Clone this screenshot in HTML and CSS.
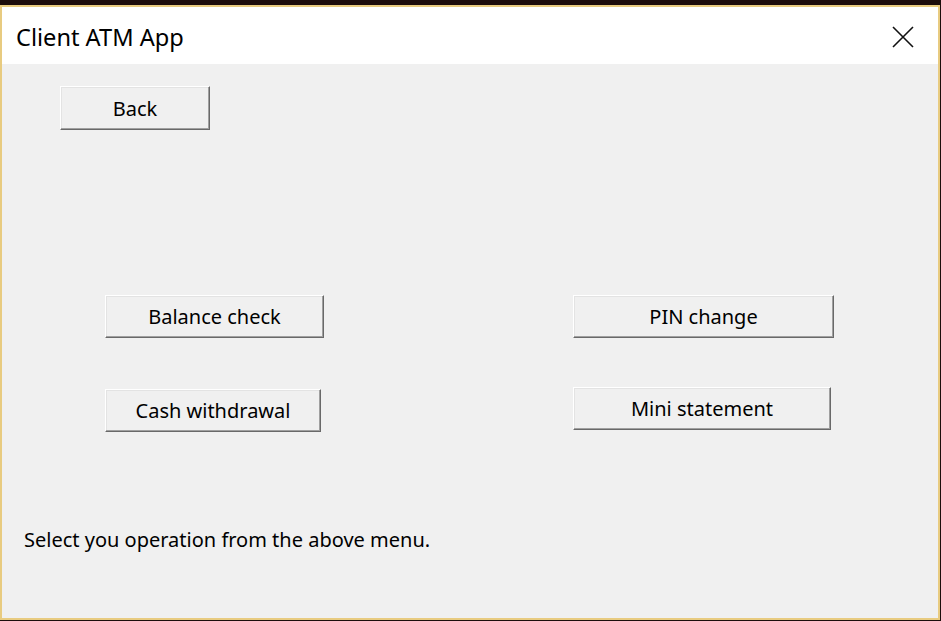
FILE: index.html
```html
<!DOCTYPE html>
<html>
<head>
<meta charset="utf-8">
<link rel="stylesheet" href="styles.css">
</head>
<body>
<div class="window">
  <div class="titlebar">
    <span class="title">Client ATM App</span>
    <span class="close">
      <svg width="22" height="22" viewBox="0 0 22 22"><path d="M1 1 L21 21 M21 1 L1 21" stroke="#111" stroke-width="1.6" fill="none"/></svg>
    </span>
  </div>
  <div class="client">
    <div class="row-back">
      <button class="btn btn-back">Back</button>
    </div>
    <div class="row row-1">
      <button class="btn btn-balance">Balance check</button>
      <button class="btn btn-pin">PIN change</button>
    </div>
    <div class="row row-2">
      <button class="btn btn-cash">Cash withdrawal</button>
      <button class="btn btn-mini">Mini statement</button>
    </div>
    <div class="status">Select you operation from the above menu.</div>
  </div>
</div>
</body>
</html>
```
FILE: styles.css
```css
html, body {
  margin: 0;
  padding: 0;
  width: 941px;
  height: 621px;
  overflow: hidden;
  background: #1c0d0c;
  font-family: "Noto Sans", "Open Sans", sans-serif;
}
.window {
  margin: 5px 1px 1px 0;
  width: 936px;
  height: 611px;
  border: 2px solid #e8cb80;
  display: flex;
  flex-direction: column;
}
.titlebar {
  height: 57px;
  background: #ffffff;
  display: flex;
  align-items: center;
  justify-content: space-between;
  padding: 0 24px 0 14px;
}
.title {
  font-size: 23.6px;
  color: #000;
  padding-top: 2px;
}
.close {
  display: flex;
  padding-top: 3px;
}
.client {
  flex: 1;
  background: #f0f0f0;
  display: flex;
  flex-direction: column;
}
.btn {
  font-family: inherit;
  font-size: 20px;
  color: #000;
  background: #f0f0f0;
  border: 1px solid;
  border-color: #ffffff #696969 #696969 #ffffff;
  box-shadow: inset -1px -1px 0 #a0a0a0, inset 1px 1px 0 #e3e3e3;
  padding: 0;
  margin: 0;
  box-sizing: border-box;
}
.row-back {
  padding: 22px 0 0 58px;
}
.btn-back {
  width: 150px;
  height: 44px;
}
.row {
  display: flex;
  align-items: flex-start;
  padding-left: 103px;
}
.row-1 {
  margin-top: 165px;
}
.row-2 {
  margin-top: 49px;
}
.btn-balance { width: 219px; height: 43px; }
.btn-pin { width: 261px; height: 43px; margin-left: 249px; }
.btn-cash { width: 216px; height: 43px; margin-top: 2px; }
.btn-mini { width: 258px; height: 43px; margin-left: 252px; }
.status {
  margin: 94px 0 0 22px;
  font-size: 20px;
  color: #000;
}
```
